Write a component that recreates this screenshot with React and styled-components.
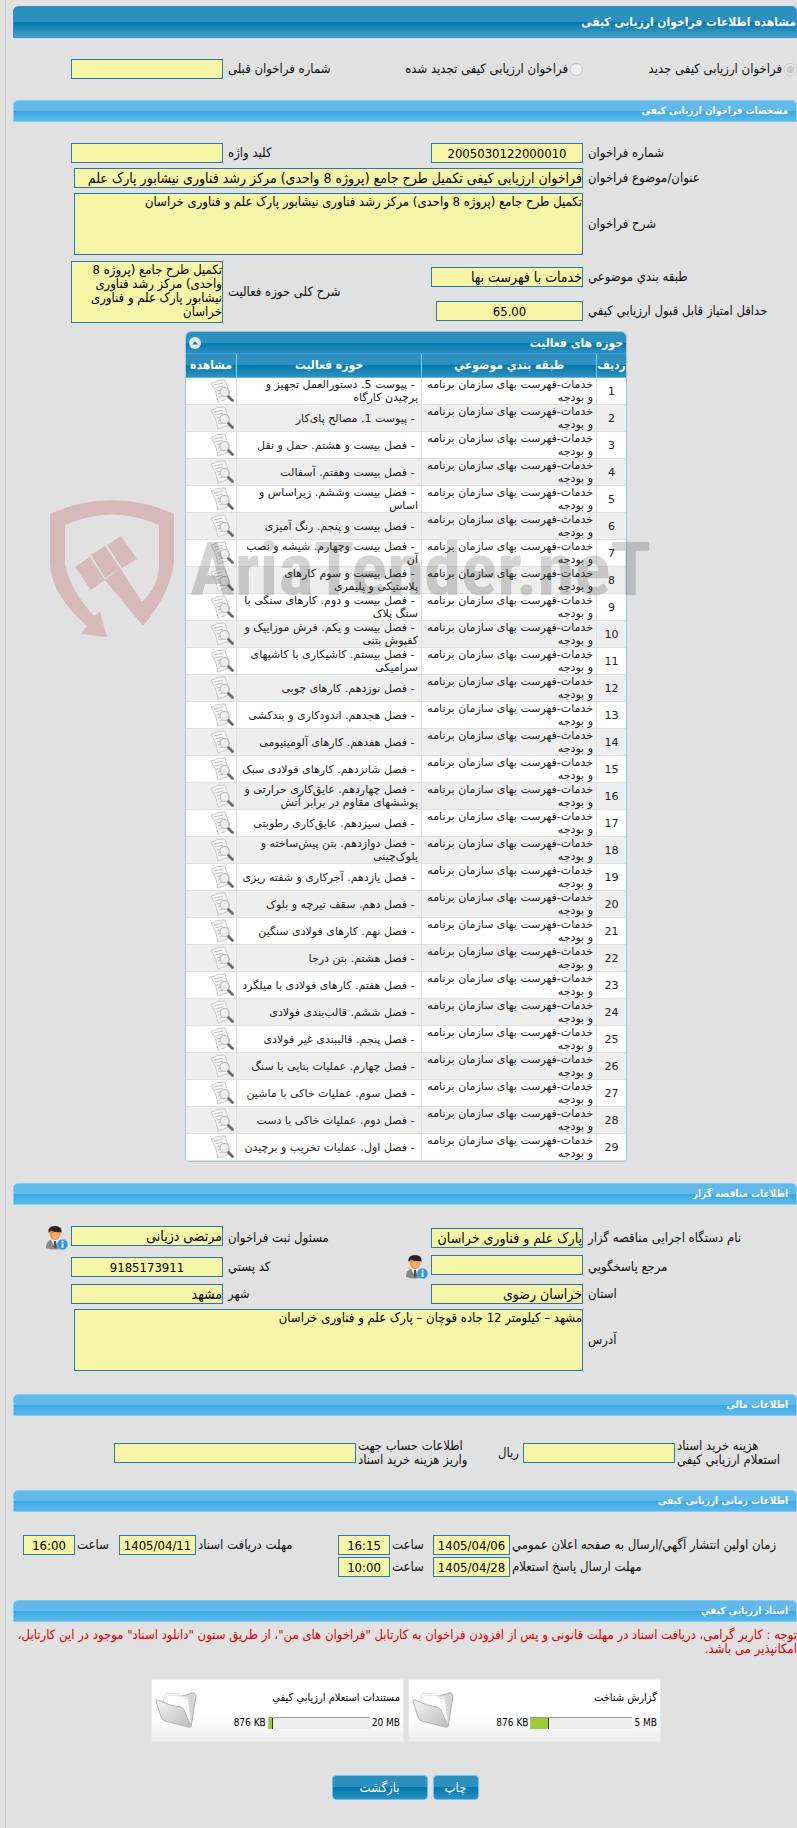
import React from 'react';
import styled, { createGlobalStyle } from 'styled-components';

const GlobalStyle = createGlobalStyle`
  * {
    box-sizing: border-box;
  }

  body {
    margin: 0;
    background: #e1e1e1;
    color: #111;
    font-family: 'DejaVu Sans Condensed', 'DejaVu Sans', sans-serif;
    font-size: 13px;
    line-height: 14px;
    overflow-x: hidden;
  }

  input, textarea, button {
    font-family: inherit;
  }
`;

const Page = styled.div`
  direction: rtl;
  margin-left: 5px;
  padding: 6px 0 28px 7px;
  border-left: 1px solid #c9c9c9;
`;

const PageTitle = styled.h1`
  height: 32px;
  margin: 0;
  border: 1px solid #2c90df;
  border-radius: 5px 5px 0 0;
  background: linear-gradient(#2e90bf 50%, #0078ae 50%, #4a9fc6);
  color: #fff;
  font-size: 12px;
  line-height: 31px;
`;

const SectionTitle = styled.h2`
  height: 22px;
  margin: 0;
  padding: 0 8px;
  border: 1px solid #79d0f5;
  border-radius: 5px 5px 0 0;
  background: linear-gradient(#63baea 50%, #38a8e2 50%, #5fb8ea);
  color: #fff;
  font-size: 10px;
  line-height: 20px;
`;

const Form = styled.div`
  display: grid;
  grid-template-columns: 1fr 152px 208px 152px 58px;
  row-gap: 5px;
  align-items: center;
  padding: 21px 0 ${({ $bottom }) => $bottom ?? 21}px;
`;

const Label = styled.label`
  grid-column: ${({ $column }) => $column ?? 'auto'};
  padding-left: ${({ $pad }) => $pad ?? 5}px;
  text-align: left;
  white-space: nowrap;
`;

const LabelCell = styled.div`
  grid-column: 3;
  display: flex;
  align-items: center;
  justify-content: space-between;
  height: 24px;
  padding-right: 3px;
`;

const Input = styled.input`
  grid-column: ${({ $column }) => $column ?? 'auto'};
  align-self: ${({ $top }) => ($top ? 'start' : 'center')};
  width: ${({ $width }) => ($width ? `${$width}px` : '100%')};
  min-width: 0;
  height: 20px;
  padding: 0;
  border: 1px solid #2a7aa8;
  background: #f6f4a6;
  color: #000;
  font-size: ${({ $center }) => ($center ? 13 : 14)}px;
  text-align: ${({ $center }) => ($center ? 'center' : 'right')};
  outline: none;
`;

const WideInput = styled(Input)`
  grid-column: 2 / 5;
  width: calc(100% - 3px);
`;

const TextArea = styled.textarea`
  display: block;
  width: 100%;
  height: 62px;
  padding: 1px 0;
  border: 1px solid #2a7aa8;
  background: #f6f4a6;
  color: #000;
  font-size: 13px;
  line-height: 14px;
  resize: none;
  overflow: hidden;
  outline: none;
`;

const WideTextArea = styled(TextArea)`
  grid-column: 2 / 5;
  width: calc(100% - 3px);
`;

const Choice = styled.label`
  display: flex;
  align-items: center;
  gap: 2px;
  white-space: nowrap;
`;

const Radio = styled.input`
  width: 13px;
  height: 13px;
  margin: 0;
`;

const FieldStack = styled.div`
  grid-column: 1 / 3;
  display: grid;
  grid-template-columns: 1fr 152px;
  row-gap: 14px;
  align-items: center;
  padding: 7px 0 3px;
`;

const IconButton = styled.button`
  display: inline-flex;
  margin: 0;
  padding: 0;
  border: 0;
  background: none;
  cursor: pointer;
`;

const PersonCell = styled.div`
  display: flex;
  height: 24px;
  padding-right: 3px;
`;

const GridArea = styled.div`
  position: relative;
  padding-left: 172px;
  padding-right: 170px;
  margin-bottom: 21px;
`;

const GridPanel = styled.div`
  border: 1px solid #9cc7e2;
  border-radius: 6px 6px 4px 4px;
  overflow: hidden;
`;

const GridCaption = styled.div`
  display: flex;
  align-items: center;
  justify-content: space-between;
  height: 22px;
  padding: 0 3px;
  border-bottom: 1px solid #3f9be0;
  background: linear-gradient(#2e90bf 50%, #0078ae 50%, #2e90bf);
  color: #fff;
  font-size: 12px;
  font-weight: bold;
`;

const Table = styled.table`
  width: 100%;
  table-layout: fixed;
  border-collapse: separate;
  border-spacing: 0;
  font-family: 'DejaVu Sans', sans-serif;
  font-size: 11px;
  line-height: 13px;
`;

const HeadCell = styled.th`
  width: ${({ $width }) => $width ?? 'auto'};
  height: 24px;
  padding: 0;
  border-bottom: 1px solid #63baea;
  border-left: 1px solid #79d0f5;
  background: linear-gradient(#2e90bf 46%, #0078ae 46%, #2e90bf);
  color: #fff;
  font-family: 'DejaVu Sans Condensed', 'DejaVu Sans', sans-serif;
  font-size: 12px;
  white-space: nowrap;

  &:last-child {
    border-left: 0;
  }
`;

const BodyRow = styled.tr`
  background: #fff;

  &:nth-child(even) {
    background: #eee;
  }
`;

const Cell = styled.td`
  height: 27px;
  padding: 0 3px;
  border-bottom: 1px solid #e0e0e0;
  border-left: 1px solid #e0e0e0;
  color: #222;
  text-align: ${({ $center }) => ($center ? 'center' : 'right')};

  &:last-child {
    border-left: 0;
    padding: 0 2px;
  }
`;

const CellIcon = styled(IconButton)`
  display: flex;
`;

const Watermark = styled.div`
  position: absolute;
  top: 167px;
  left: 35px;
  direction: ltr;
  display: flex;
  align-items: center;
  gap: 14px;
  pointer-events: none;
`;

const WatermarkText = styled.span`
  color: rgba(60, 60, 60, 0.22);
  font-family: 'Liberation Sans Narrow', 'Roboto Condensed', Roboto, sans-serif;
  font-size: 75px;
  font-weight: bold;
  line-height: 90px;
  white-space: nowrap;
`;

const MoneyRow = styled.div`
  display: grid;
  grid-template-columns: 122px 152px 37px 130px 242px 1fr;
  align-items: center;
  padding: 23px 0;
`;

const Unit = styled.span`
  padding-right: 4px;
`;

const DateRow = styled.div`
  display: grid;
  grid-template-columns: 1fr 77px 43px 52px 142px 77px 44px 52px 10px;
  row-gap: 2px;
  align-items: center;
  padding: 23px 0;
`;

const Notice = styled.p`
  margin: 6px 0 23px;
  color: #d00;
`;

const Cards = styled.div`
  display: flex;
  justify-content: center;
  gap: 4px;
  padding-left: 2px;
`;

const Card = styled.div`
  display: flex;
  justify-content: space-between;
  width: 253px;
  height: 63px;
  padding: 11px 3px 0;
  border: 1px solid #e8e8e8;
  background: linear-gradient(#fff 60%, #ededed);
  color: #000;
  font-size: 11px;
`;

const CardBody = styled.div`
  display: flex;
  flex-direction: column;
  gap: 11px;
`;

const Usage = styled.div`
  display: flex;
  align-items: center;
  gap: 2px;
  font-size: 10px;
  direction: ltr;
  justify-content: flex-end;
`;

const Bar = styled.div`
  width: 102px;
  height: 12px;
  border-top: 1px solid #999;
  border-left: 1px solid #bbb;
  background: #eee;
`;

const BarFill = styled.div`
  height: 100%;
  border-right: 1px solid #333;
  background: #9acd32;
`;

const Actions = styled.div`
  display: flex;
  justify-content: center;
  gap: 5px;
  margin-top: 33px;
`;

const Button = styled.button`
  width: ${({ $width }) => $width}px;
  height: 25px;
  padding: 0;
  border: 1px solid #63c5f2;
  border-radius: 4px;
  background: linear-gradient(#2e90bf 50%, #0078ae 50%, #2e90bf);
  color: #fff;
  font-size: 13px;
`;

const DESCRIPTION =
  'تکمیل طرح جامع (پروژه 8 واحدی) مرکز رشد فناوری نیشابور پارک علم و فناوری خراسان';

const CATEGORY = 'خدمات-فهرست بهای سازمان برنامه و بودجه';

const ACTIVITIES = [
  'پیوست 5. دستورالعمل تجهیز و برچیدن کارگاه',
  'پیوست 1. مصالح پای‌کار',
  'فصل بیست و هشتم. حمل و نقل',
  'فصل بیست وهفتم. آسفالت',
  'فصل بیست وششم. زیراساس و اساس',
  'فصل بیست و پنجم. رنگ آمیزی',
  'فصل بیست وچهارم. شیشه و نصب آن',
  'فصل بیست و سوم کارهای پلاستیکی\u00a0و\u00a0پلیمری',
  'فصل بیست و دوم. کارهای سنگی با سنگ پلاک',
  'فصل بیست و یکم. فرش موزاییک و کفپوش بتنی',
  'فصل بیستم. کاشیکاری با کاشیهای سرامیکی',
  'فصل نوزدهم. کارهای چوبی',
  'فصل هجدهم. اندودکاری و بندکشی',
  'فصل هفدهم. کارهای آلومینیومی',
  'فصل شانزدهم. کارهای فولادی سبک',
  'فصل چهاردهم. عایق‌کاری حرارتی و پوششهای مقاوم در برابر آتش',
  'فصل سیزدهم. عایق‌کاری رطوبتی',
  'فصل دوازدهم. بتن پیش‌ساخته و بلوک‌چینی',
  'فصل یازدهم. آجرکاری و شفته ریزی',
  'فصل دهم. سقف تیرچه و بلوک',
  'فصل نهم. کارهای فولادی سنگین',
  'فصل هشتم. بتن درجا',
  'فصل هفتم. کارهای فولادی با میلگرد',
  'فصل ششم. قالب‌بندی فولادی',
  'فصل پنجم. قالببندی غیر فولادی',
  'فصل چهارم. عملیات بنایی با سنگ',
  'فصل سوم. عملیات خاکی با ماشین',
  'فصل دوم. عملیات خاکی با دست',
  'فصل اول. عملیات تخریب و برچیدن',
];

const DOCUMENTS = [
  { title: 'گزارش شناخت', used: 876, limit: 5 },
  { title: 'مستندات استعلام ارزيابي کيفي', used: 876, limit: 20 },
];

const ViewIcon = () => (
  <svg width="24" height="24" viewBox="0 0 24 24" fill="none">
    <path d="M1 4 Q5 4 7 1.500 L15 1 Q16 6 19 12 L19 19 L8 23 Q7 13 1 4Z" fill="#f6f6f6" stroke="#cacaca" />
    <path d="M4 6l9-2M5 9l8-2M7 12l4-1M8 15l3-1M9 18l4-1" stroke="#c4c4c4" />
    <path d="M18.500 17.500l4 4" stroke="#6a6a6a" strokeWidth="2.800" strokeLinecap="round" />
    <circle cx="14.500" cy="13" r="4.500" fill="#ececec" stroke="#b8b8b8" strokeWidth="1.200" />
    <path d="M12 12.500q1-2 3-2" stroke="#fff" />
  </svg>
);

const PersonIcon = () => (
  <svg width="22" height="24" viewBox="0 0 22 24">
    <path d="M0 22Q0 14.500 6 13.500h6q5 1 5 8.500-8 3-17 0Z" fill="#8a8a8a" />
    <path d="M5 13.500l4 9 4-9Z" fill="#f4f4f4" />
    <path d="M8 15h2l1 6-2 2-1.500-2Z" fill="#555" />
    <path d="M3.500 6Q4 1.500 9 1.500T14.500 6Q14.500 13 9 14 3.500 13 3.500 6Z" fill="#f08c3c" />
    <path d="M5.500 8Q9 5 13 8q-.5 5-4 5.500Q6 12.500 5.500 8Z" fill="#fcae62" />
    <path d="M2.500 7Q1.500 0 9 0t6.500 7L14 6Q8 6.500 5 4.500Z" fill="#252525" />
    <circle cx="16.500" cy="18.500" r="5.300" fill="#2f95e8" stroke="#8ccaf6" strokeWidth=".7" />
    <path d="M16.500 14.800v1.700M16.500 17.500v4.200" stroke="#fff" strokeWidth="2" />
  </svg>
);

const FolderIcon = () => (
  <svg width="42" height="38" viewBox="0 0 42 38">
    <defs>
      <linearGradient id="folderFront" x1="0" y1="0" x2="1" y2="1">
        <stop offset="0" stopColor="#f4f4f4" />
        <stop offset="1" stopColor="#bdbdbd" />
      </linearGradient>
    </defs>
    <path d="M20 7L34 3q3-2 5-1 2 1 2 3l-5 31-10-6Z" fill="#d6d6d6" stroke="#b0b0b0" />
    <path d="M8 10L11 2l13 1 2 2 7 1 3 25Z" fill="#fff" stroke="#dedede" />
    <path d="M9 10l4-6 12 1 1 2 7 1" fill="none" stroke="#e4e4e4" />
    <path d="M1 10q-1-2 2-1 12 6 22 7 3 1 4 3l6 14q1 4-2 3L10 30q-3-1-4-4Z" fill="url(#folderFront)" stroke="#b5b5b5" />
  </svg>
);

const CollapseIcon = () => (
  <svg width="12" height="12" viewBox="0 0 12 12">
    <circle cx="6" cy="6" r="6" fill="#dceaf8" />
    <path d="M3 7.500l3-3 3 3Z" fill="#1b6ea3" />
  </svg>
);

const ShieldLogo = () => (
  <svg width="128" height="142" viewBox="0 0 128 142" fill="rgba(180, 60, 60, 0.24)">
    <path d="M2 16Q64-12 126 16V60Q125 92 95 128L57 82 72 70 94 104Q111 88 111 66V27Q64 6 17 27V66Q22 92 46 118L52 114 59 139 33 136 39 128Q4 98 2 66Z" />
    <path d="M27 69L42 59 57 82 43 92Z" />
    <path d="M43 57L57 48 72 70 57 80Z" />
    <path d="M59 47L73 38 89 61 74 70Z" />
  </svg>
);

const ReadField = ({ id, value = '', as: Component = Input, ...rest }) => (
  <Component id={id} value={value} readOnly dir="rtl" {...rest} />
);

const ActivityGrid = () => (
  <GridArea>
    <GridPanel>
      <GridCaption>
        حوزه های فعالیت
        <IconButton type="button" aria-label="جمع کردن">
          <CollapseIcon />
        </IconButton>
      </GridCaption>
      <Table>
        <thead>
          <tr>
            <HeadCell $width="30px">ردیف</HeadCell>
            <HeadCell $width="175px">طبقه بندي موضوعي</HeadCell>
            <HeadCell>حوزه فعالیت</HeadCell>
            <HeadCell $width="50px">مشاهده</HeadCell>
          </tr>
        </thead>
        <tbody>
          {ACTIVITIES.map((activity, index) => (
            <BodyRow key={activity}>
              <Cell $center>{index + 1}</Cell>
              <Cell>{CATEGORY}</Cell>
              <Cell>&nbsp;- {activity}</Cell>
              <Cell>
                <CellIcon type="button" aria-label="مشاهده">
                  <ViewIcon />
                </CellIcon>
              </Cell>
            </BodyRow>
          ))}
        </tbody>
      </Table>
    </GridPanel>
    <Watermark>
      <ShieldLogo />
      <WatermarkText>AriaTender.neT</WatermarkText>
    </Watermark>
  </GridArea>
);

const DateField = ({ id, label, date, time }) => (
  <>
    <Label htmlFor={`${id}-date`} $pad={2}>{label}</Label>
    <ReadField id={`${id}-date`} value={date} $center />
    <Label htmlFor={`${id}-time`} $pad={2}>ساعت</Label>
    <ReadField id={`${id}-time`} value={time} $center />
  </>
);

const App = () => {
  return (
    <>
      <GlobalStyle />
      <Page>
        <PageTitle>مشاهده اطلاعات فراخوان ارزیابی کیفی</PageTitle>
        <Form>
          <Choice>
            <Radio type="radio" name="kind" defaultChecked disabled />
            فراخوان ارزیابی کیفی جدید
          </Choice>
          <Choice>
            <Radio type="radio" name="kind" disabled />
            فراخوان ارزیابی کیفی تجدید شده
          </Choice>
          <Label htmlFor="previous" $column={3}>شماره فراخوان قبلی</Label>
          <ReadField id="previous" />
        </Form>

        <SectionTitle>مشخصات فراخوان ارزیابی کیفی</SectionTitle>
        <Form $bottom={7}>
          <Label htmlFor="number">شماره فراخوان</Label>
          <ReadField id="number" value="2005030122000010" $center />
          <Label htmlFor="keyword">کلید واژه</Label>
          <ReadField id="keyword" />
          <Label htmlFor="subject" $column={1}>عنوان/موضوع فراخوان</Label>
          <ReadField
            as={WideInput}
            id="subject"
            value="فراخوان ارزیابی کیفی تکمیل طرح جامع (پروژه 8 واحدی) مرکز رشد فناوری نیشابور پارک علم"
          />
          <Label htmlFor="description" $column={1}>شرح فراخوان</Label>
          <ReadField as={WideTextArea} id="description" value={DESCRIPTION} />
          <FieldStack>
            <Label htmlFor="category">طبقه بندي موضوعي</Label>
            <ReadField id="category" value="خدمات با فهرست بها" />
            <Label htmlFor="score">حداقل امتیاز قابل قبول ارزیابي کیفي</Label>
            <ReadField id="score" value="65.00" $width={147} $center />
          </FieldStack>
          <Label htmlFor="scope">شرح کلی حوزه فعالیت</Label>
          <ReadField as={TextArea} id="scope" value={DESCRIPTION} />
        </Form>
        <ActivityGrid />

        <SectionTitle>اطلاعات مناقصه گزار</SectionTitle>
        <Form $bottom={23}>
          <Label htmlFor="agency">نام دستگاه اجرایی مناقصه گزار</Label>
          <ReadField id="agency" value="پارک علم و فناوری خراسان" />
          <Label htmlFor="registrar">مسئول ثبت فراخوان</Label>
          <ReadField id="registrar" value="مرتضی دزیانی" $top />
          <PersonCell>
            <IconButton type="button" aria-label="مسئول ثبت">
              <PersonIcon />
            </IconButton>
          </PersonCell>
          <Label htmlFor="contact" $column={1}>مرجع پاسخگويي</Label>
          <ReadField id="contact" $top />
          <LabelCell>
            <IconButton type="button" aria-label="مرجع">
              <PersonIcon />
            </IconButton>
            <Label htmlFor="postal">کد پستي</Label>
          </LabelCell>
          <ReadField id="postal" value="9185173911" $center />
          <Label htmlFor="province" $column={1}>استان</Label>
          <ReadField id="province" value="خراسان رضوی" />
          <Label htmlFor="city">شهر</Label>
          <ReadField id="city" value="مشهد" />
          <Label htmlFor="address" $column={1}>آدرس</Label>
          <ReadField
            as={WideTextArea}
            id="address"
            value="مشهد – کیلومتر 12 جاده قوچان – پارک علم و فناوری خراسان"
          />
        </Form>

        <SectionTitle>اطلاعات مالي</SectionTitle>
        <MoneyRow>
          <Label htmlFor="price" $pad={2}>
            هزینه خرید اسناد
            <br />
            استعلام ارزیابي کیفي
          </Label>
          <ReadField id="price" />
          <Unit>ريال</Unit>
          <Label htmlFor="account" $pad={2}>
            اطلاعات حساب جهت
            <br />
            واریز هزینه خرید اسناد
          </Label>
          <ReadField id="account" />
        </MoneyRow>

        <SectionTitle>اطلاعات زمانی ارزیابی کیفی</SectionTitle>
        <DateRow>
          <DateField
            id="publish"
            label="زمان اولین انتشار آگهي/ارسال به صفحه اعلان عمومي"
            date="1405/04/06"
            time="16:15"
          />
          <DateField id="receive" label="مهلت دریافت اسناد" date="1405/04/11" time="16:00" />
          <span />
          <DateField id="reply" label="مهلت ارسال پاسخ استعلام" date="1405/04/28" time="10:00" />
        </DateRow>

        <SectionTitle>اسناد ارزيابي کيفي</SectionTitle>
        <Notice>
          توجه : کاربر گرامی، دریافت اسناد در مهلت قانونی و پس از افزودن فراخوان به کارتابل "فراخوان
          های من"، از طریق ستون "دانلود اسناد" موجود در این کارتابل، امکانپذیر می باشد.
        </Notice>
        <Cards>
          {DOCUMENTS.map(({ title, used, limit }) => (
            <Card key={title}>
              <CardBody>
                <div>{title}</div>
                <Usage>
                  {used} KB
                  <Bar>
                    <BarFill style={{ width: `${(used / (limit * 1024)) * 100}%` }} />
                  </Bar>
                  {limit} MB
                </Usage>
              </CardBody>
              <FolderIcon />
            </Card>
          ))}
        </Cards>
        <Actions>
          <Button type="button" $width={46}>چاپ</Button>
          <Button type="button" $width={96}>بازگشت</Button>
        </Actions>
      </Page>
    </>
  );
};

export default App;
